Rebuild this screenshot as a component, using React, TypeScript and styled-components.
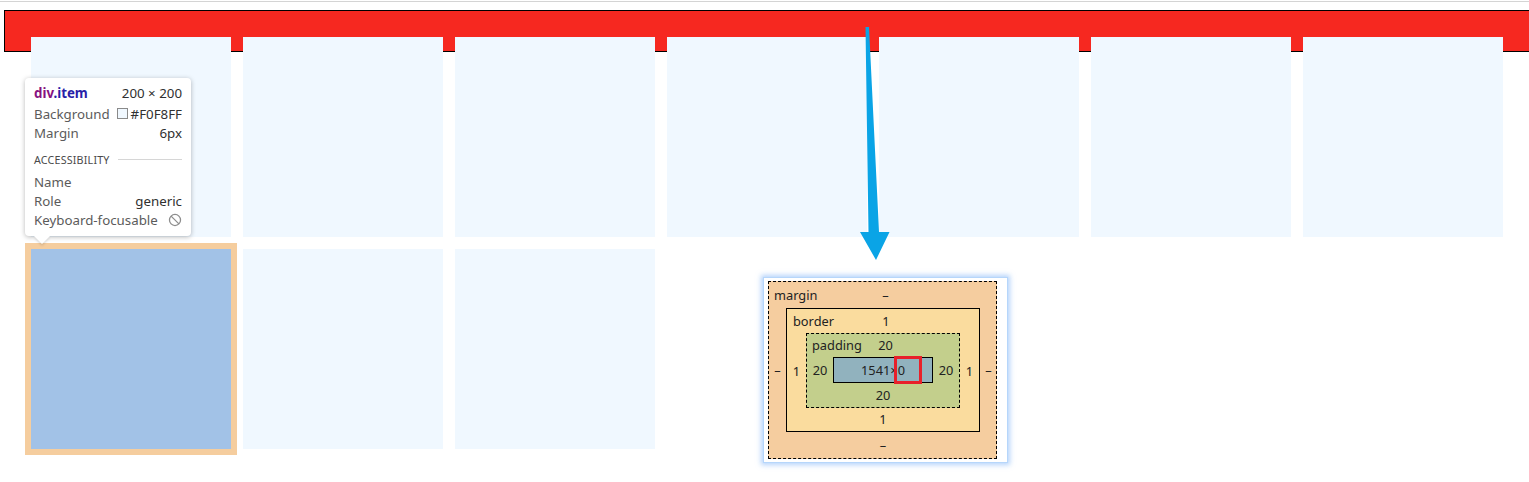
import React from 'react';
import styled, { createGlobalStyle } from 'styled-components';

const GlobalStyle = createGlobalStyle`
  html, body {
    margin: 0;
    padding: 0;
    background: #ffffff;
    overflow: hidden;
  }
  body {
    font-family: 'Noto Sans', 'Open Sans', sans-serif;
  }
`;

const Page = styled.div`
  position: relative;
  width: 1529px;
  height: 482px;
  overflow: hidden;
  background: #ffffff;
`;

const TopRule = styled.div`
  height: 1px;
  margin-top: 1px;
  background: #d4d4d4;
`;

const Container = styled.div`
  box-sizing: content-box;
  width: 1541px;
  height: 0;
  margin: 8px 0 0 4px;
  padding: 20px;
  border: 1px solid #000000;
  background: #f62820;
  display: flex;
  flex-wrap: wrap;
  align-content: flex-start;
`;

const Item = styled.div<{ $selected?: boolean }>`
  flex: none;
  width: 200px;
  height: 200px;
  margin: 6px;
  background: ${({ $selected }) => ($selected ? '#a2c2e7' : '#f0f8ff')};
  box-shadow: ${({ $selected }) => ($selected ? '0 0 0 6px #f5cd9e' : 'none')};
`;

/* devtools hover tooltip */
const Tooltip = styled.div`
  position: absolute;
  left: 25px;
  top: 78px;
  width: 166px;
  box-sizing: border-box;
  padding: 5px 9px 7px 9px;
  background: #ffffff;
  border-radius: 4px;
  box-shadow: 0 1px 5px rgba(0, 0, 0, 0.28);
  font-size: 13.3px;
  color: #5b5b5b;

  &::after {
    content: '';
    position: absolute;
    left: 9px;
    bottom: -8px;
    border-left: 8px solid transparent;
    border-right: 8px solid transparent;
    border-top: 8px solid #ffffff;
    filter: drop-shadow(0 2px 1px rgba(0, 0, 0, 0.12));
  }
`;

const Row = styled.div<{ $gap?: number }>`
  display: flex;
  align-items: center;
  justify-content: space-between;
  height: 19px;
  margin-bottom: ${({ $gap }) => $gap ?? 0}px;
  white-space: nowrap;
`;

const Selector = styled.span`
  font-weight: 700;
  color: #881280;

  span {
    color: #2a1fa8;
  }
`;

const Value = styled.span`
  display: flex;
  align-items: center;
  gap: 3px;
  color: #303030;
`;

const Swatch = styled.span<{ $color: string }>`
  display: inline-block;
  width: 9px;
  height: 9px;
  border: 1px solid #8a8a8a;
  background: ${({ $color }) => $color};
`;

const Section = styled.div`
  display: flex;
  align-items: center;
  height: 19px;
  margin: 8px 0 3px;
  font-size: 10.7px;
  letter-spacing: 0.2px;
  color: #4a4a4a;

  &::after {
    content: '';
    flex: 1;
    margin-left: 8px;
    border-top: 1px solid #d6d6d6;
  }
`;

const BanIcon = () => (
  <svg width="14" height="14" viewBox="0 0 24 24" fill="none" stroke="#8d8d8d" strokeWidth="2.2">
    <circle cx="12" cy="12" r="9.5" />
    <path d="M5.3 5.3 18.7 18.7" />
  </svg>
);

/* box-model panel */
const ModelPanel = styled.div`
  position: absolute;
  left: 763px;
  top: 277px;
  padding: 3px 10px 4px 4px;
  background: #ffffff;
  border: 1px solid #b6d6fb;
  box-shadow: 0 0 5px 2px rgba(120, 175, 245, 0.55);
  font-size: 12.8px;
  color: #222222;
  box-sizing: border-box;
  width: 245px;
  height: 186px;
`;

const Layer = styled.div<{
  $bg: string;
  $border: string;
  $side: number;
  $top: number;
  $bottom: number;
}>`
  display: grid;
  grid-template-columns: ${({ $side }) => `${$side}px auto ${$side}px`};
  grid-template-rows: ${({ $top, $bottom }) => `${$top}px auto ${$bottom}px`};
  background: ${({ $bg }) => $bg};
  border: 1px ${({ $border }) => $border} #000000;
`;

const EdgeRow = styled.div<{ $pad?: number }>`
  grid-column: 1 / 4;
  display: grid;
  grid-template-columns: 1fr auto 1fr;
  align-items: center;
  line-height: 1;
  padding-left: ${({ $pad }) => $pad ?? 0}px;
`;

const Label = styled.span`
  justify-self: start;
`;

const EdgeSide = styled.div`
  display: flex;
  align-items: center;
  justify-content: center;
`;

const Content = styled.div`
  position: relative;
  width: 100px;
  height: 26px;
  box-sizing: border-box;
  border: 1px solid #000000;
  background: #91b2be;
  display: flex;
  align-items: center;
  justify-content: center;
`;

const EditBox = styled.div`
  position: absolute;
  left: 60px;
  top: -2px;
  width: 28px;
  height: 28px;
  box-sizing: border-box;
  border: 3px solid #e8202a;
`;

type BoxProps = {
  label: string;
  bg: string;
  border: string;
  side: number;
  top: number;
  bottom: number;
  pad: number;
  values: [string, string, string, string];
  children: React.ReactNode;
};

const BoxLayer: React.FC<BoxProps> = ({ label, bg, border, side, top, bottom, pad, values, children }) => (
  <Layer $bg={bg} $border={border} $side={side} $top={top} $bottom={bottom}>
    <EdgeRow $pad={pad}>
      <Label>{label}</Label>
      <span>{values[0]}</span>
      <span />
    </EdgeRow>
    <EdgeSide>{values[3]}</EdgeSide>
    {children}
    <EdgeSide>{values[1]}</EdgeSide>
    <EdgeRow>
      <span />
      <span>{values[2]}</span>
      <span />
    </EdgeRow>
  </Layer>
);

const Arrow = styled.svg`
  position: absolute;
  left: 0;
  top: 0;
  pointer-events: none;
`;

const items = Array.from({ length: 10 }, (_, i) => i);

export default function App() {
  return (
    <Page>
      <GlobalStyle />
      <TopRule />
      <Container>
        {items.map((i) => (
          <Item key={i} $selected={i === 7} />
        ))}
      </Container>

      <Tooltip>
        <Row $gap={2}>
          <Selector>
            div<span>.item</span>
          </Selector>
          <Value>200 × 200</Value>
        </Row>
        <Row>
          <span>Background</span>
          <Value>
            <Swatch $color="#F0F8FF" />
            #F0F8FF
          </Value>
        </Row>
        <Row>
          <span>Margin</span>
          <Value>6px</Value>
        </Row>
        <Section>ACCESSIBILITY</Section>
        <Row>
          <span>Name</span>
        </Row>
        <Row>
          <span>Role</span>
          <Value>generic</Value>
        </Row>
        <Row>
          <span>Keyboard-focusable</span>
          <BanIcon />
        </Row>
      </Tooltip>

      <Arrow width="1529" height="482" viewBox="0 0 1529 482">
        <polygon
          points="865.5,27 869,27 879,232 889.5,232 876,260 860,232 868.5,232"
          fill="#0aa4e6"
        />
      </Arrow>

      <ModelPanel>
        <BoxLayer label="margin" bg="#f5cd9f" border="dashed" side={17} top={26} bottom={26} pad={5} values={['–', '–', '–', '–']}>
          <BoxLayer label="border" bg="#fadc9e" border="solid" side={19} top={24} bottom={23} pad={6} values={['1', '1', '1', '1']}>
            <BoxLayer label="padding" bg="#c3cf8c" border="dashed" side={26} top={23} bottom={24} pad={5} values={['20', '20', '20', '20']}>
              <Content>
                1541×0
                <EditBox />
              </Content>
            </BoxLayer>
          </BoxLayer>
        </BoxLayer>
      </ModelPanel>
    </Page>
  );
}
